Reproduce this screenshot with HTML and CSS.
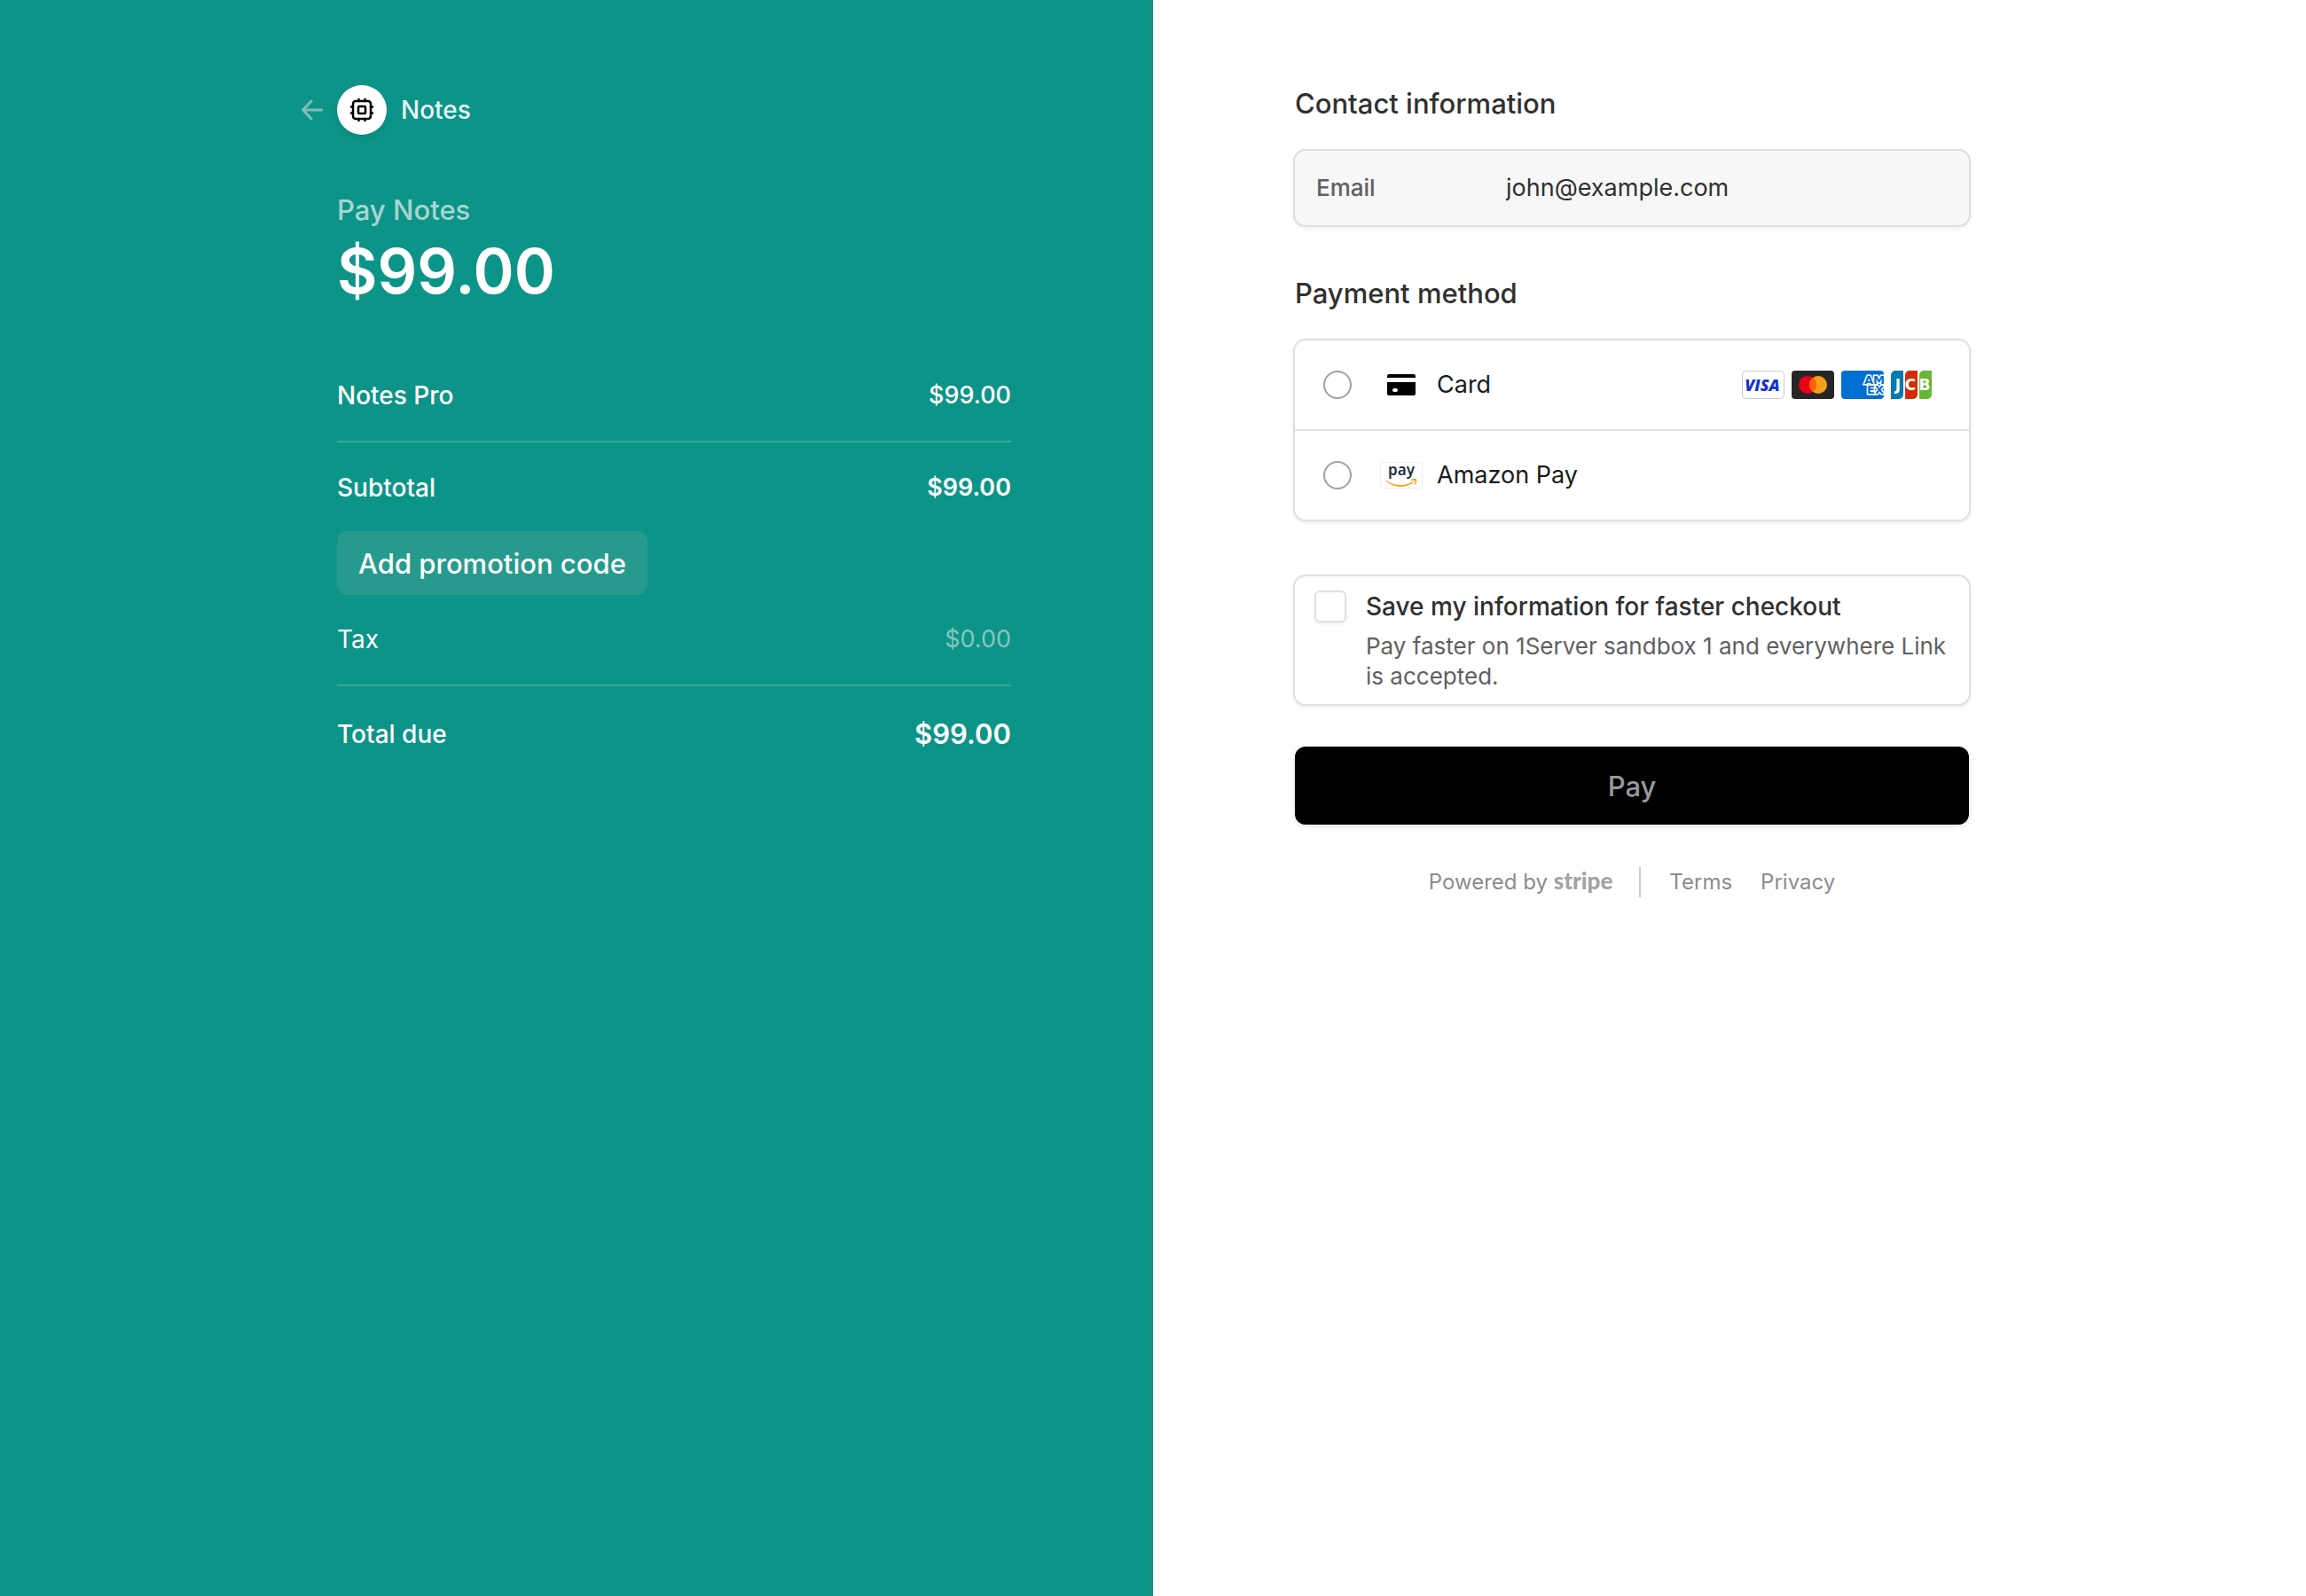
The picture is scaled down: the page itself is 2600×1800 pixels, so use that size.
FILE: index.html
```html
<!DOCTYPE html>
<html lang="en">
<head>
<meta charset="utf-8">
<meta name="viewport" content="width=device-width, initial-scale=1">
<title>Notes checkout</title>
<link rel="stylesheet" href="styles.css">
</head>
<body>
<div class="checkout">
  <section class="summary" aria-label="Order summary">
    <div class="column">
      <header class="merchant">
        <a class="back" href="#" aria-label="Back">
          <svg width="24" height="24" viewBox="0 0 24 24" fill="none" stroke="currentColor" stroke-width="3" stroke-linecap="round" stroke-linejoin="round"><path d="M11 2 1.500 12 11 22M2 12h20.500"/></svg>
        </a>
        <span class="merchant-logo">
          <svg width="28" height="28" viewBox="0 0 28 28" fill="none" stroke="#000" stroke-width="2.500" stroke-linecap="round" stroke-linejoin="round"><rect x="4" y="4" width="20" height="20" rx="3"/><rect x="10" y="10" width="8" height="8" rx="1"/><path d="M10.500 2v2M17.500 2v2M10.500 24v2M17.500 24v2M2 10.500h2M2 17.500h2M24 10.500h2M24 17.500h2"/></svg>
        </span>
        <a class="merchant-name" href="#">Notes</a>
      </header>
      <p class="pay-label">Pay Notes</p>
      <p class="pay-amount">$99.00</p>
      <div class="line line-item"><span>Notes Pro</span><span class="amount">$99.00</span></div>
      <div class="line line-subtotal"><span>Subtotal</span><strong class="amount">$99.00</strong></div>
      <button class="promo" type="button">Add promotion code</button>
      <div class="line line-tax"><span>Tax</span><span class="amount tax-amount">$0.00</span></div>
      <div class="line line-total"><span>Total due</span><strong class="total-amount">$99.00</strong></div>
    </div>
  </section>

  <main class="payment">
    <form class="column">
      <h2 class="heading">Contact information</h2>
      <div class="box contact">
        <label for="email">Email</label>
        <input id="email" type="email" value="john@example.com" readonly>
      </div>

      <h2 class="heading">Payment method</h2>
      <div class="box methods">
        <div class="method">
          <input type="radio" name="method" id="card">
          <span class="method-icon">
            <svg width="32" height="24" viewBox="0 0 32 24"><path d="M2 0h28a2 2 0 0 1 2 2v2H0V2a2 2 0 0 1 2-2zM0 9h32v13a2 2 0 0 1-2 2H2a2 2 0 0 1-2-2zm8 7a2 2 0 0 0 0 4h2a2 2 0 0 0 0-4z" fill-rule="evenodd"/></svg>
          </span>
          <label for="card">Card</label>
          <span class="brands">
            <svg width="48" height="32" viewBox="0 0 48 32"><rect x=".5" y=".5" width="47" height="31" rx="4" fill="#fff" stroke="#ccc"/><text class="visa" x="23" y="23">VISA</text></svg>
            <svg width="48" height="32" viewBox="0 0 48 32" role="img" aria-label="Mastercard"><rect width="48" height="32" rx="4" fill="#252525"/><circle cx="18" cy="16" r="10" fill="#eb001b"/><circle cx="30" cy="16" r="10" fill="#f79e1b"/><path d="M24 8a10 10 0 0 1 0 16 10 10 0 0 1 0-16z" fill="#ff5f00"/></svg>
            <svg width="48" height="32" viewBox="0 0 48 32"><rect width="48" height="32" rx="4" fill="#016fd0"/><text class="amex" x="26" y="15">AM</text><text class="amex" x="29" y="26">EX</text></svg>
            <svg width="48" height="32" viewBox="0 0 48 32"><path d="M5 0h9v27a5 5 0 0 1-5 5H0V5a5 5 0 0 1 5-5z" fill="#047ab1"/><path d="M21 0h9v27a5 5 0 0 1-5 5h-9V5a5 5 0 0 1 5-5z" fill="#d42d06"/><path d="M37 0h9v27a5 5 0 0 1-5 5h-9V5a5 5 0 0 1 5-5z" fill="#67b637"/><text class="jcb" x="8 22 38" y="22">JCB</text></svg>
          </span>
        </div>
        <div class="method">
          <input type="radio" name="method" id="amazon">
          <span class="method-icon">
            <svg width="48" height="32" viewBox="0 0 48 32"><rect x=".5" y="1.500" width="47" height="29" rx="3" fill="#fff" stroke="#eee"/><text class="amazon" x="24" y="16">pay</text><path d="M6.500 21.500c9 7 22 7.500 31 1.500.7-.4 1.200.3.600.8-9 7.500-24 6.500-32-1.700-.4-.4 0-.9.4-.6z" fill="#f90"/><path d="M34.500 21.300c2-1.300 4.500-1.500 6.500-1 .8 2-.2 5-1.800 6.500-.3.200-.6 0-.5-.3.500-1.500 1.200-3.500.8-4.300-.8-.6-3-.5-4.600-.4-.5 0-.7-.3-.4-.5z" fill="#f90"/></svg>
          </span>
          <label for="amazon">Amazon Pay</label>
        </div>
      </div>

      <div class="box save">
        <input type="checkbox" id="save">
        <div class="save-text">
          <label for="save">Save my information for faster checkout</label>
          <p>Pay faster on 1Server sandbox 1 and everywhere Link is accepted.</p>
        </div>
      </div>

      <button class="pay" type="submit">Pay</button>

      <footer class="footer">
        <a class="powered" href="#">Powered by <span class="stripe">stripe</span></a>
        <span class="footer-links"><a href="#">Terms</a><a href="#">Privacy</a></span>
      </footer>
    </form>
  </main>
</div>
</body>
</html>
```

FILE: styles.css
```css
* {
  box-sizing: border-box;
}

body {
  margin: 0;
  background: #fff;
  color: #303030;
  font-family: Inter, "Liberation Sans", sans-serif;
  font-size: 28px;
  line-height: 36px;
}

h2,
p {
  margin: 0;
}

a {
  color: inherit;
  text-decoration: none;
}

svg {
  display: block;
}

button,
input {
  font: inherit;
}

.checkout {
  display: grid;
  grid-template-columns: 1fr 1fr;
  min-height: 100vh;
}

.column {
  display: flex;
  flex-direction: column;
  width: 100%;
  max-width: 760px;
}

/* Order summary */

.summary {
  display: flex;
  justify-content: flex-end;
  padding: 96px 160px 96px 64px;
  background: #0d9488;
  color: #fff;
  font-weight: 500;
}

.merchant {
  display: flex;
  align-items: center;
  gap: 16px;
  margin-left: -40px;
}

.back {
  color: #7fbfb8;
}

.merchant-logo {
  display: flex;
  align-items: center;
  justify-content: center;
  width: 56px;
  height: 56px;
  border-radius: 50%;
  background: #fff;
  box-shadow: 0 4px 10px rgb(0 0 0 / 8%);
}

.merchant-name {
  color: #e7f5f3;
}

.pay-label {
  margin-top: 65px;
  color: #a9d5cf;
  font-size: 31px;
  line-height: 40px;
}

.pay-amount {
  margin-top: 5px;
  font-size: 70px;
  font-weight: 600;
  line-height: 88px;
}

.line {
  display: flex;
  align-items: center;
  justify-content: space-between;
}

.line strong {
  font-weight: 600;
}

.amount {
  font-size: 27px;
}

.line-item,
.line-tax {
  padding-bottom: 33px;
  border-bottom: 2px solid rgb(255 255 255 / 18%);
}

.line-item {
  margin-top: 78px;
}

.line-subtotal {
  margin-top: 33px;
}

.line-total {
  margin-top: 36px;
}

.promo {
  align-self: flex-start;
  margin-top: 31px;
  padding: 17px 24px 15px;
  border: 0;
  border-radius: 12px;
  background: #269b8d;
  color: #fff;
  font-size: 31px;
  font-weight: 500;
  line-height: 40px;
}

.line-tax {
  margin-top: 32px;
  font-weight: 400;
}

.line-total {
  font-size: 28px;
}

.tax-amount {
  color: #86c6bf;
}

.total-amount {
  font-size: 31px;
}

/* Payment form */

.payment {
  padding: 97px 64px 96px 160px;
}

.heading {
  font-size: 31px;
  font-weight: 500;
  line-height: 40px;
}

.box {
  margin: 31px -2px 0;
  border: 2px solid #e0e0e0;
  border-radius: 14px;
  background: #fff;
  box-shadow: 0 2px 4px rgb(0 0 0 / 7%);
}

.box + .heading {
  margin-top: 55px;
}

.contact {
  display: grid;
  grid-template-columns: 214px 1fr;
  align-items: center;
  height: 88px;
  padding: 0 24px;
  background: #f7f7f7;
}

.contact label {
  color: #606060;
  font-size: 26px;
  font-weight: 500;
}

.contact input {
  min-width: 0;
  padding: 0;
  border: 0;
  outline: 0;
  background: none;
  color: #303030;
  font-size: 27px;
}

.method {
  display: flex;
  align-items: center;
  height: 100px;
  padding: 0 40px 0 32px;
  color: #1a1a1a;
  font-size: 27px;
}

.method + .method {
  height: 102px;
  border-top: 2px solid #e6e6e6;
}

.method input {
  width: 32px;
  height: 32px;
  margin: 0 32px 0 0;
  border: 2px solid #a0a0a0;
  border-radius: 50%;
  background: #fff;
  appearance: none;
}

.method-icon {
  display: flex;
  justify-content: center;
  width: 48px;
  margin-right: 16px;
}

.brands {
  display: flex;
  gap: 8px;
  margin-left: auto;
}

.visa {
  fill: #1434cb;
  font: italic 800 18px "Open Sans", sans-serif;
  text-anchor: middle;
}

.amex {
  fill: #016fd0;
  stroke: #fff;
  stroke-width: 3px;
  paint-order: stroke;
  font: bold 13px "DejaVu Sans", sans-serif;
}

.jcb {
  fill: #fff;
  font: bold 17px "DejaVu Sans", sans-serif;
  text-anchor: middle;
}

.amazon {
  fill: #232f3e;
  font: 600 17px "Noto Sans", sans-serif;
  text-anchor: middle;
}

.save {
  display: flex;
  gap: 22px;
  margin-top: 60px;
  padding: 16px 16px 14px 22px;
}

.save input {
  flex: none;
  width: 36px;
  height: 36px;
  margin: 0;
  border: 2px solid #e0e0e0;
  border-radius: 6px;
  background: #fff;
  box-shadow: 0 2px 4px rgb(0 0 0 / 7%);
  appearance: none;
}

.save label {
  display: block;
  font-weight: 500;
}

.save p {
  margin-top: 10px;
  color: #606060;
  font-size: 26px;
  line-height: 34px;
}

.pay {
  height: 88px;
  margin-top: 46px;
  padding: 2px 0 0;
  border: 0;
  border-radius: 12px;
  background: #000;
  box-shadow: 0 2px 6px rgb(0 0 0 / 12%);
  color: #999;
  font-size: 31px;
  font-weight: 500;
}

.footer {
  display: flex;
  align-items: baseline;
  justify-content: center;
  margin-top: 46px;
  color: #8c8c8c;
  font-size: 24px;
  line-height: 34px;
}

.powered {
  padding-right: 30px;
}

.stripe {
  color: #a3a3a3;
  font-family: Lato, sans-serif;
  font-size: 26px;
  font-weight: 900;
}

.footer-links {
  display: flex;
  gap: 32px;
  padding-left: 32px;
  border-left: 2px solid #ccc;
}
```
